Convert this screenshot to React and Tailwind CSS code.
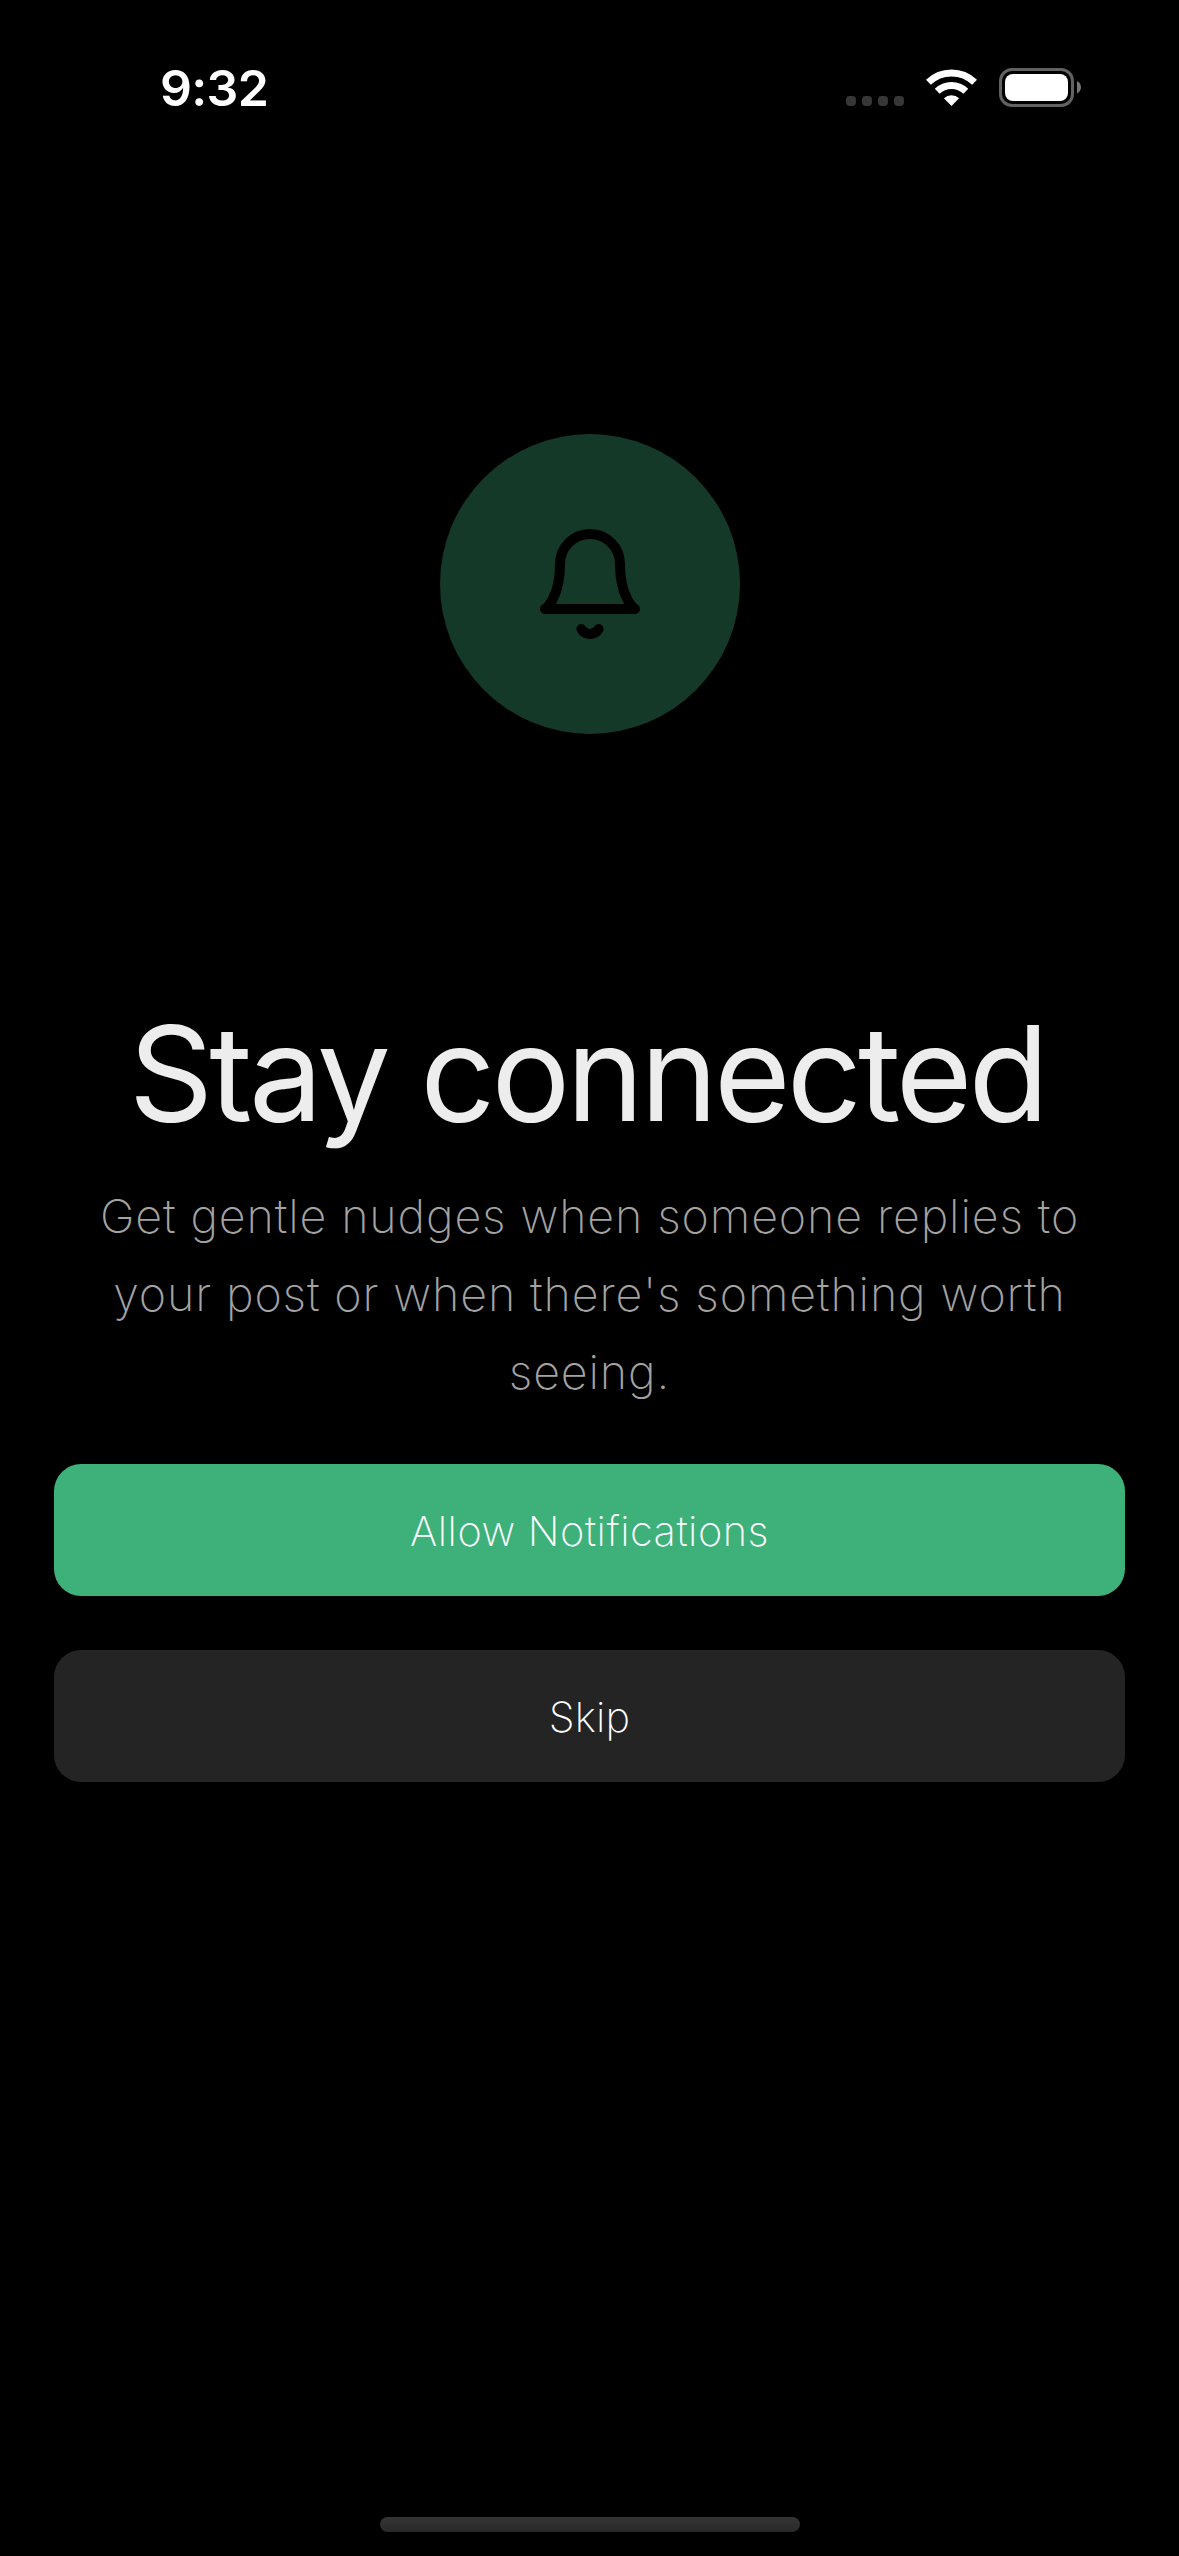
export default function App() {
  return (
    <main className="flex h-[2556px] w-[1179px] flex-col overflow-hidden bg-black font-[Inter,sans-serif] text-white">
      <header className="flex h-[177px] shrink-0 items-start justify-between pr-[98px] pl-[160px]">
        <time className="pt-[62px] text-[50px] leading-[52px] font-semibold tracking-[-0.7px]">9:32</time>
        <div className="flex items-start gap-[22px] pt-[68px]">
          <div className="flex gap-[6px] pt-[28px]">
            <i className="size-[10px] rounded-[4px] bg-[#373737]" />
            <i className="size-[10px] rounded-[4px] bg-[#373737]" />
            <i className="size-[10px] rounded-[4px] bg-[#373737]" />
            <i className="size-[10px] rounded-[4px] bg-[#373737]" />
          </div>
          <svg className="h-[39px] w-[51px]" viewBox="0 0 51 39" fill="none">
            <path d="M2.4 14.3A33.2 33.2 0 0 1 48.6 14.3" stroke="white" strokeWidth="7" />
            <path d="M11.2 23.2A20.6 20.6 0 0 1 39.8 23.2" stroke="white" strokeWidth="7" />
            <path d="M25.5 38L17.9 30.3A11.2 11.2 0 0 1 33.1 30.3Z" fill="white" />
          </svg>
          <svg className="h-[39px] w-[82px]" viewBox="0 0 82 39">
            <rect x="1.5" y="1.5" width="72" height="36" rx="11.5" fill="none" stroke="#626262" strokeWidth="3" />
            <rect x="6" y="6" width="63" height="27" rx="8" fill="white" />
            <path d="M78 13Q82 15.5 82 19.2T78 25.5Z" fill="#777" />
          </svg>
        </div>
      </header>
      <section className="flex flex-col items-center px-[54px] text-center">
        <div className="mt-[257px] flex size-[300px] items-center justify-center rounded-full bg-[#153929]">
          <svg className="size-[120px]" viewBox="0 0 24 24" fill="none" stroke="black" strokeWidth="2" strokeLinecap="round" strokeLinejoin="round">
            <path d="M18 8A6 6 0 0 0 6 8c0 7-3 9-3 9h18s-3-2-3-9" />
            <path d="M13.73 21a2 2 0 0 1-3.46 0" />
          </svg>
        </div>
        <h1 className="mt-[261px] mr-[5px] mb-[1px] text-[131.5px] leading-[158px] tracking-[-3.9px] whitespace-nowrap text-[#ededed]">Stay connected</h1>
        <p className="mt-[23px] text-[46.6px] leading-[78px] font-extralight tracking-[0.87px] whitespace-nowrap text-[#a3a3a3]">
          Get gentle nudges when someone replies to<br />
          your post or when there's something worth<br />
          seeing.
        </p>
        <button className="mt-[53px] h-[132px] w-full rounded-[27px] bg-[#3eb17b] pt-[3px] text-[41.5px] font-extralight tracking-[0.5px]">Allow Notifications</button>
        <button className="mt-[54px] h-[132px] w-full rounded-[27px] bg-[#242424] pt-[3px] text-[41.5px] font-extralight tracking-[0.2px]">Skip</button>
      </section>
      <footer className="mx-auto mt-auto mb-[24px] h-[15px] w-[420px] rounded-full bg-linear-to-b from-[#353535] to-[#292929]" />
    </main>
  );
}
